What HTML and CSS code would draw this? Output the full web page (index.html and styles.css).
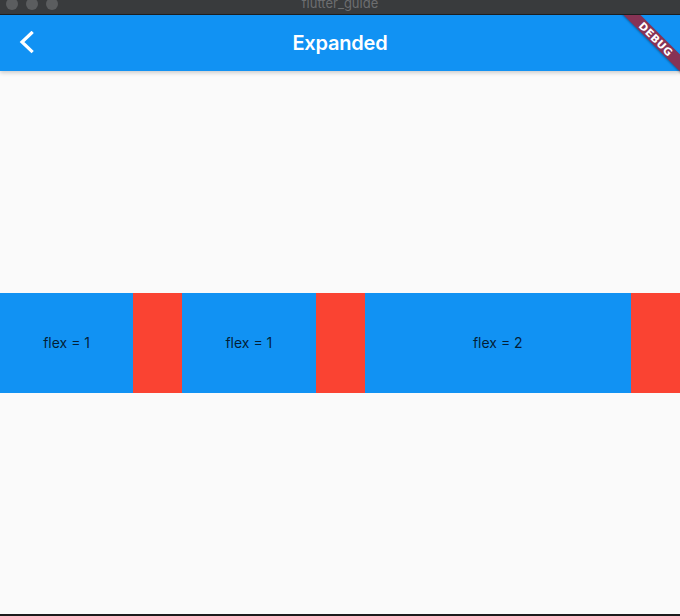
FILE: index.html
```html
<!DOCTYPE html>
<html>
<head>
<meta charset="utf-8">
<link rel="stylesheet" href="styles.css">
</head>
<body>
<div class="window">
  <div class="titlebar">
    <div class="lights">
      <span class="light"></span><span class="light"></span><span class="light"></span>
    </div>
    <div class="wtitle">flutter_guide</div>
  </div>
  <div class="appbar">
    <div class="back">
      <svg width="16" height="24" viewBox="0 0 16 24"><polyline points="12.5,2 3,11 12.5,20" fill="none" stroke="#fff" stroke-width="3.2" stroke-linecap="square" stroke-linejoin="miter"/></svg>
    </div>
    <div class="title">Expanded</div>
  </div>
  <div class="content">
    <div class="row">
      <div class="blue f1">flex = 1</div>
      <div class="red"></div>
      <div class="blue f1">flex = 1</div>
      <div class="red"></div>
      <div class="blue f2">flex = 2</div>
      <div class="red"></div>
    </div>
  </div>
  <div class="bottom"></div>
  <div class="banner-wrap"><div class="banner">DEBUG</div></div>
</div>
</body>
</html>
```
FILE: styles.css
```css
html, body {
  margin: 0;
  padding: 0;
  width: 680px;
  height: 616px;
  overflow: hidden;
}
.window {
  position: relative;
  display: flex;
  flex-direction: column;
  width: 680px;
  height: 616px;
  background: #fafafa;
  font-family: Inter, Roboto, "Liberation Sans", sans-serif;
}
.titlebar {
  position: relative;
  height: 14px;
  background: #393b3d;
  border-bottom: 1px solid #1e1f20;
  overflow: hidden;
}
.lights {
  display: flex;
  gap: 8px;
  padding-left: 6px;
  margin-top: -2px;
}
.light {
  width: 12px;
  height: 12px;
  border-radius: 50%;
  background: #5b5d5f;
}
.wtitle {
  position: absolute;
  left: 0;
  right: 0;
  top: -5px;
  text-align: center;
  font-family: Inter, "Liberation Sans", sans-serif;
  font-size: 13px;
  color: #6d6e70;
}
.appbar {
  position: relative;
  z-index: 1;
  height: 56px;
  background: #1192f3;
  display: flex;
  align-items: center;
  justify-content: center;
  box-shadow: 0 2px 4px rgba(0,0,0,0.18);
}
.back {
  position: absolute;
  left: 19px;
  top: 16px;
  width: 16px;
  height: 24px;
}
.back svg { display: block; }
.title {
  color: #fff;
  font-size: 20px;
  font-weight: 600;
  letter-spacing: -0.2px;
  margin-top: -1px;
}
.content {
  flex: 1;
  display: flex;
  align-items: center;
}
.row {
  display: flex;
  width: 100%;
  height: 100px;
}
.blue {
  background: #1192f3;
  display: flex;
  align-items: center;
  justify-content: center;
  font-size: 14px;
  color: rgba(0,0,0,0.8);
  min-width: 0;
}
.f1 { flex: 1 1 0; }
.f2 { flex: 2 1 0; }
.red {
  width: 49px;
  flex: none;
  background: #fa4332;
}
.bottom {
  height: 2px;
  background: #1c1c1c;
}
.banner-wrap {
  position: absolute;
  top: 15px;
  right: 0;
  width: 80px;
  height: 80px;
  overflow: hidden;
  z-index: 2;
}
.banner {
  position: absolute;
  left: -4px;
  top: 18px;
  width: 120px;
  height: 12px;
  line-height: 12px;
  transform: rotate(45deg);
  background: #873355;
  color: #fff;
  font-family: "DejaVu Sans", sans-serif;
  font-weight: bold;
  font-size: 10.5px;
  letter-spacing: 0.4px;
  text-align: center;
  box-shadow: 0 1px 2px rgba(0,0,0,0.3);
}
```
